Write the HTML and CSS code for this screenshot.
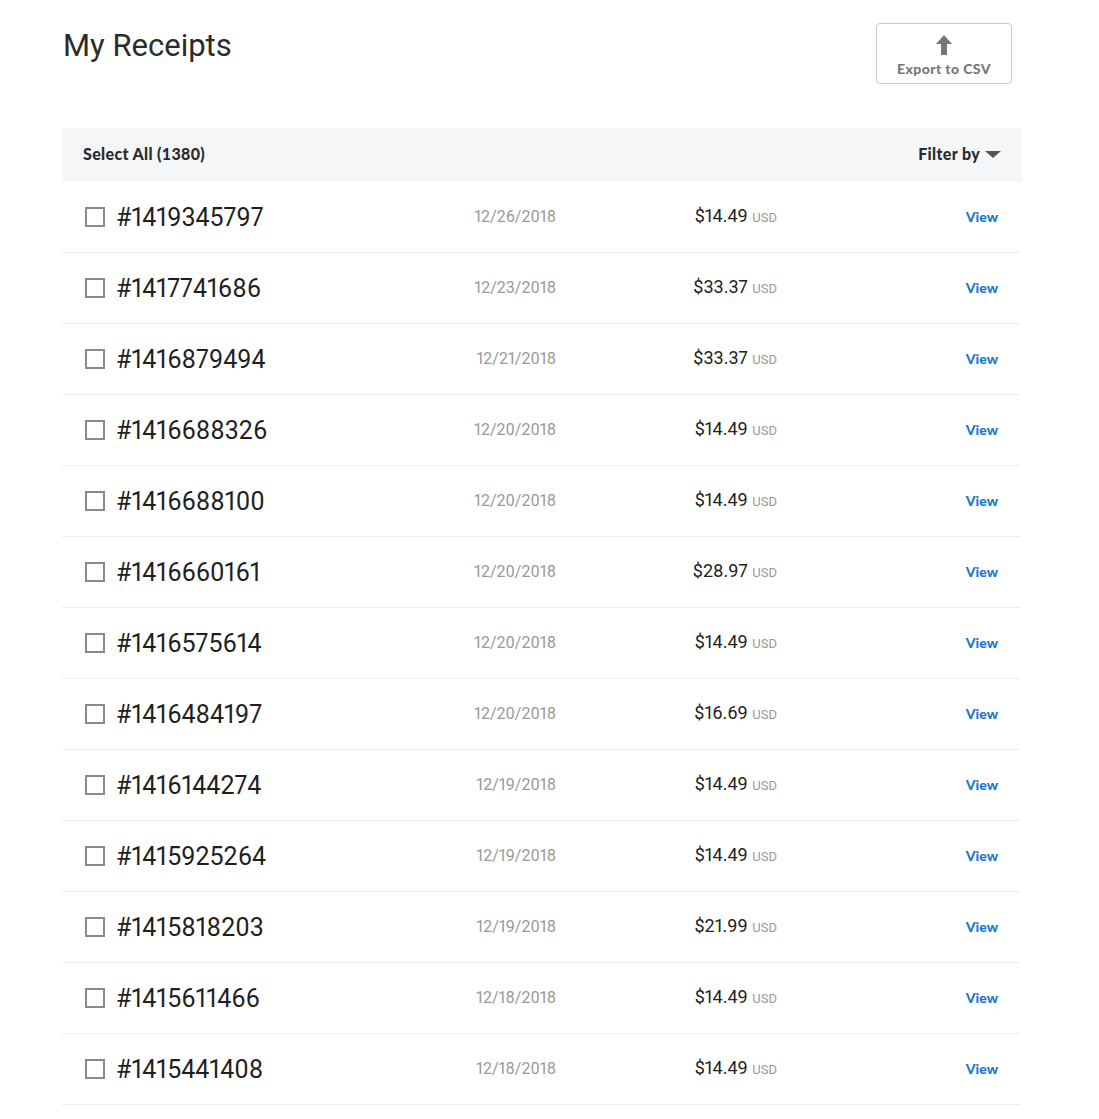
FILE: index.html
```html
<!DOCTYPE html>
<html>
<head>
<meta charset="utf-8">
<link rel="stylesheet" href="styles.css">
</head>
<body>
<div class="page">
  <div class="top">
    <h1 class="title">My Receipts</h1>
    <button class="export">
      <svg class="export-icon" width="18" height="22" viewBox="0 0 18 22"><path d="M9 1 L17 10 L12 10 L12 21 L6 21 L6 10 L1 10 Z" fill="#777"/></svg>
      <span>Export to CSV</span>
    </button>
  </div>
  <div class="bar">
    <span class="select-all">Select All (1380)</span>
    <span class="filter">Filter by <svg width="16" height="8" viewBox="0 0 16 8"><path d="M0 0 L16 0 L8 7 Z" fill="#555"/></svg></span>
  </div>
  <div class="list">
    <div class="row"><div class="num"><span class="box"></span>#1419345797</div><div class="date">12/26/2018</div><div class="amt">$14.49 <span class="cur">USD</span></div><div class="view">View</div></div>
    <div class="row"><div class="num"><span class="box"></span>#1417741686</div><div class="date">12/23/2018</div><div class="amt">$33.37 <span class="cur">USD</span></div><div class="view">View</div></div>
    <div class="row"><div class="num"><span class="box"></span>#1416879494</div><div class="date">12/21/2018</div><div class="amt">$33.37 <span class="cur">USD</span></div><div class="view">View</div></div>
    <div class="row"><div class="num"><span class="box"></span>#1416688326</div><div class="date">12/20/2018</div><div class="amt">$14.49 <span class="cur">USD</span></div><div class="view">View</div></div>
    <div class="row"><div class="num"><span class="box"></span>#1416688100</div><div class="date">12/20/2018</div><div class="amt">$14.49 <span class="cur">USD</span></div><div class="view">View</div></div>
    <div class="row"><div class="num"><span class="box"></span>#1416660161</div><div class="date">12/20/2018</div><div class="amt">$28.97 <span class="cur">USD</span></div><div class="view">View</div></div>
    <div class="row"><div class="num"><span class="box"></span>#1416575614</div><div class="date">12/20/2018</div><div class="amt">$14.49 <span class="cur">USD</span></div><div class="view">View</div></div>
    <div class="row"><div class="num"><span class="box"></span>#1416484197</div><div class="date">12/20/2018</div><div class="amt">$16.69 <span class="cur">USD</span></div><div class="view">View</div></div>
    <div class="row"><div class="num"><span class="box"></span>#1416144274</div><div class="date">12/19/2018</div><div class="amt">$14.49 <span class="cur">USD</span></div><div class="view">View</div></div>
    <div class="row"><div class="num"><span class="box"></span>#1415925264</div><div class="date">12/19/2018</div><div class="amt">$14.49 <span class="cur">USD</span></div><div class="view">View</div></div>
    <div class="row"><div class="num"><span class="box"></span>#1415818203</div><div class="date">12/19/2018</div><div class="amt">$21.99 <span class="cur">USD</span></div><div class="view">View</div></div>
    <div class="row"><div class="num"><span class="box"></span>#1415611466</div><div class="date">12/18/2018</div><div class="amt">$14.49 <span class="cur">USD</span></div><div class="view">View</div></div>
    <div class="row"><div class="num"><span class="box"></span>#1415441408</div><div class="date">12/18/2018</div><div class="amt">$14.49 <span class="cur">USD</span></div><div class="view">View</div></div>
  </div>
</div>
</body>
</html>
```
FILE: styles.css
```css
html, body {
  margin: 0;
  padding: 0;
  background: #fff;
  font-family: Roboto, "Liberation Sans", sans-serif;
  color: #222;
}
.page {
  width: 960px;
  margin-left: 62px;
}
.top {
  display: flex;
  justify-content: space-between;
  align-items: flex-start;
  height: 128px;
}
.title {
  margin: 28px 0 0 1px;
  font-size: 31px;
  font-weight: 400;
  color: #2b2b2b;
  line-height: 36px;
}
.export {
  margin: 23px 10px 0 0;
  width: 136px;
  height: 61px;
  border: 1px solid #c8c8c8;
  border-radius: 4px;
  background: #fff;
  display: flex;
  flex-direction: column;
  align-items: center;
  padding: 10px 0 0 0;
  font-family: Lato, Roboto, sans-serif;
  font-size: 14px;
  font-weight: 900;
  letter-spacing: 0.4px;
  color: #777;
}
.export-icon {
  display: block;
  margin-bottom: 4px;
}
.bar {
  height: 54px;
  box-sizing: border-box;
  padding: 0 21px 3px 21px;
  background: #f5f6f7;
  display: flex;
  justify-content: space-between;
  align-items: center;
  font-family: Lato, Roboto, sans-serif;
  font-size: 16px;
  font-weight: 900;
  letter-spacing: 0.35px;
  color: #2b2b2b;
}
.filter {
  display: flex;
  align-items: center;
  gap: 5px;
}
.filter svg {
  margin-top: 2px;
}
.list {
  width: 958px;
}
.row {
  height: 70px;
  border-bottom: 1px solid #ededed;
  display: grid;
  grid-template-columns: 351px 120px 221px 221px;
  padding-left: 23px;
  align-items: center;
}
.num {
  display: flex;
  align-items: center;
  font-size: 25px;
  color: #1f1f1f;
  font-variant-numeric: proportional-nums;
  margin-left: -1px;
}
.box {
  width: 16px;
  height: 16px;
  border: 2px solid #8a8a8a;
  margin-right: 11px;
  margin-left: 1px;
  box-sizing: content-box;
}
.date {
  text-align: right;
  font-size: 16px;
  color: #999;
  margin-top: -2px;
  font-variant-numeric: proportional-nums;
}
.amt {
  text-align: right;
  font-size: 18px;
  color: #222;
  margin-top: -3px;
  font-variant-numeric: proportional-nums;
}
.cur {
  font-size: 13px;
  color: #999;
}
.view {
  text-align: right;
  font-family: Lato, Roboto, sans-serif;
  font-size: 14px;
  font-weight: 900;
  color: #1976d2;
  margin-top: -1px;
}
```
